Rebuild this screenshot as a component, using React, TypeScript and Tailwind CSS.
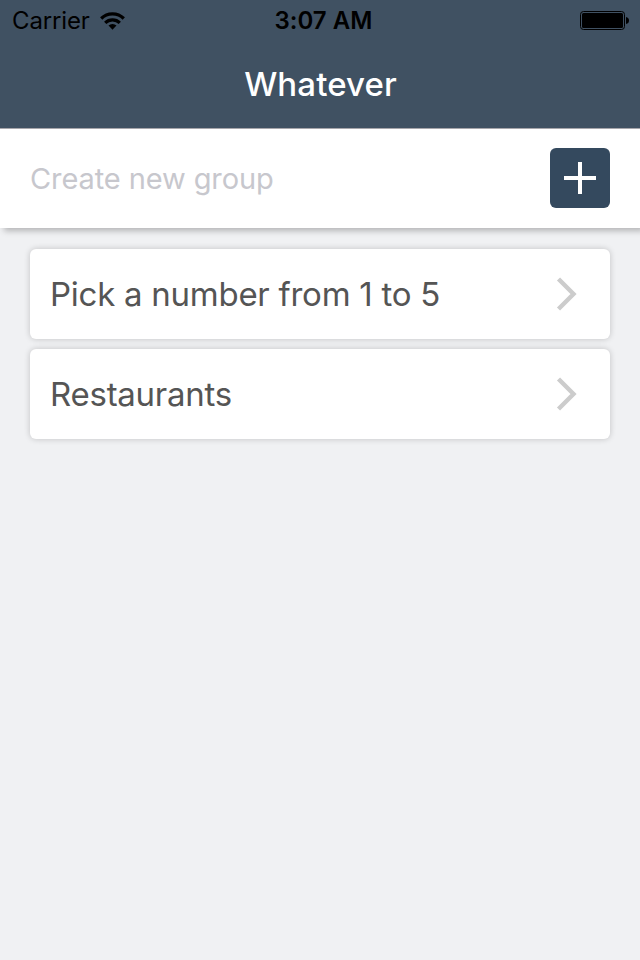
import React, { useState } from "react";

const groups = ["Pick a number from 1 to 5", "Restaurants"];

function StatusBar() {
  return (
    <div className="h-10 pl-3 pr-[11px] pt-px grid grid-cols-3 items-center text-black text-[24px]">
      <div className="flex items-center gap-[10px]">
        <span className="pt-px tracking-[-0.15px]">Carrier</span>
        <svg width="25" height="18" viewBox="0 0 25 18" fill="none" stroke="black" strokeWidth="3.2">
          <path d="M1.2 6.5a16 16 0 0 1 22.6 0" />
          <path d="M5.2 10.8a10.4 10.4 0 0 1 14.6 0" />
          <path d="M12.5 17.8l-4-4.3a5.8 5.8 0 0 1 8 0z" fill="black" stroke="none" />
        </svg>
      </div>
      <span className="pt-px pl-[6px] text-center font-semibold tracking-[0.05px]">3:07 AM</span>
      <svg className="justify-self-end" width="49" height="20" viewBox="0 0 49 20">
        <rect x="0.5" y="0.5" width="44" height="18" rx="3" fill="none" stroke="black" />
        <rect x="2" y="2" width="41" height="15" rx="1.5" />
        <path d="M46 6q3 .5 3 3.5t-3 3.5z" />
      </svg>
    </div>
  );
}

export default function App() {
  const [name, setName] = useState("");

  return (
    <div className="w-[640px] h-[960px] bg-[#f0f1f3] font-['Inter','Liberation_Sans',sans-serif] overflow-hidden">
      <header className="relative z-10 h-32 bg-[#405162]">
        <StatusBar />
        <h1 className="h-[88px] pl-px leading-[88px] text-center text-white text-[33px] font-medium tracking-[0.1px]">Whatever</h1>
      </header>

      <div className="h-[100px] px-[30px] bg-white border-t border-[#a7a6ab] flex items-center justify-between shadow-[4px_3px_6px_rgba(0,0,0,0.25)]">
        <input
          className="w-[480px] pt-px text-[29px] tracking-[-0.1px] outline-none placeholder:text-[#c7c7cd]"
          placeholder="Create new group"
          value={name}
          onChange={(e) => setName(e.target.value)}
        />
        <button className="size-[60px] -mt-px rounded-md bg-[#34495e] flex items-center justify-center" aria-label="Add group">
          <svg width="32" height="32" viewBox="0 0 32 32" stroke="white" strokeWidth="4">
            <path d="M16 0v32M0 16h32" />
          </svg>
        </button>
      </div>

      <ul className="px-[30px] pt-[21px] space-y-[10px]">
        {groups.map((group) => (
          <li
            key={group}
            className="h-[90px] pl-5 pr-8 bg-white rounded-md flex items-center justify-between shadow-[0_0_6px_rgba(0,0,0,0.2)]"
          >
            <span className="pt-0.5 text-[33px] tracking-[-0.26px] text-[#555555]">{group}</span>
            <svg width="22" height="34" viewBox="0 0 22 34" fill="none" stroke="#cccccc" strokeWidth="4.4">
              <path d="M2.5 2l15 15l-15 15" />
            </svg>
          </li>
        ))}
      </ul>
    </div>
  );
}
